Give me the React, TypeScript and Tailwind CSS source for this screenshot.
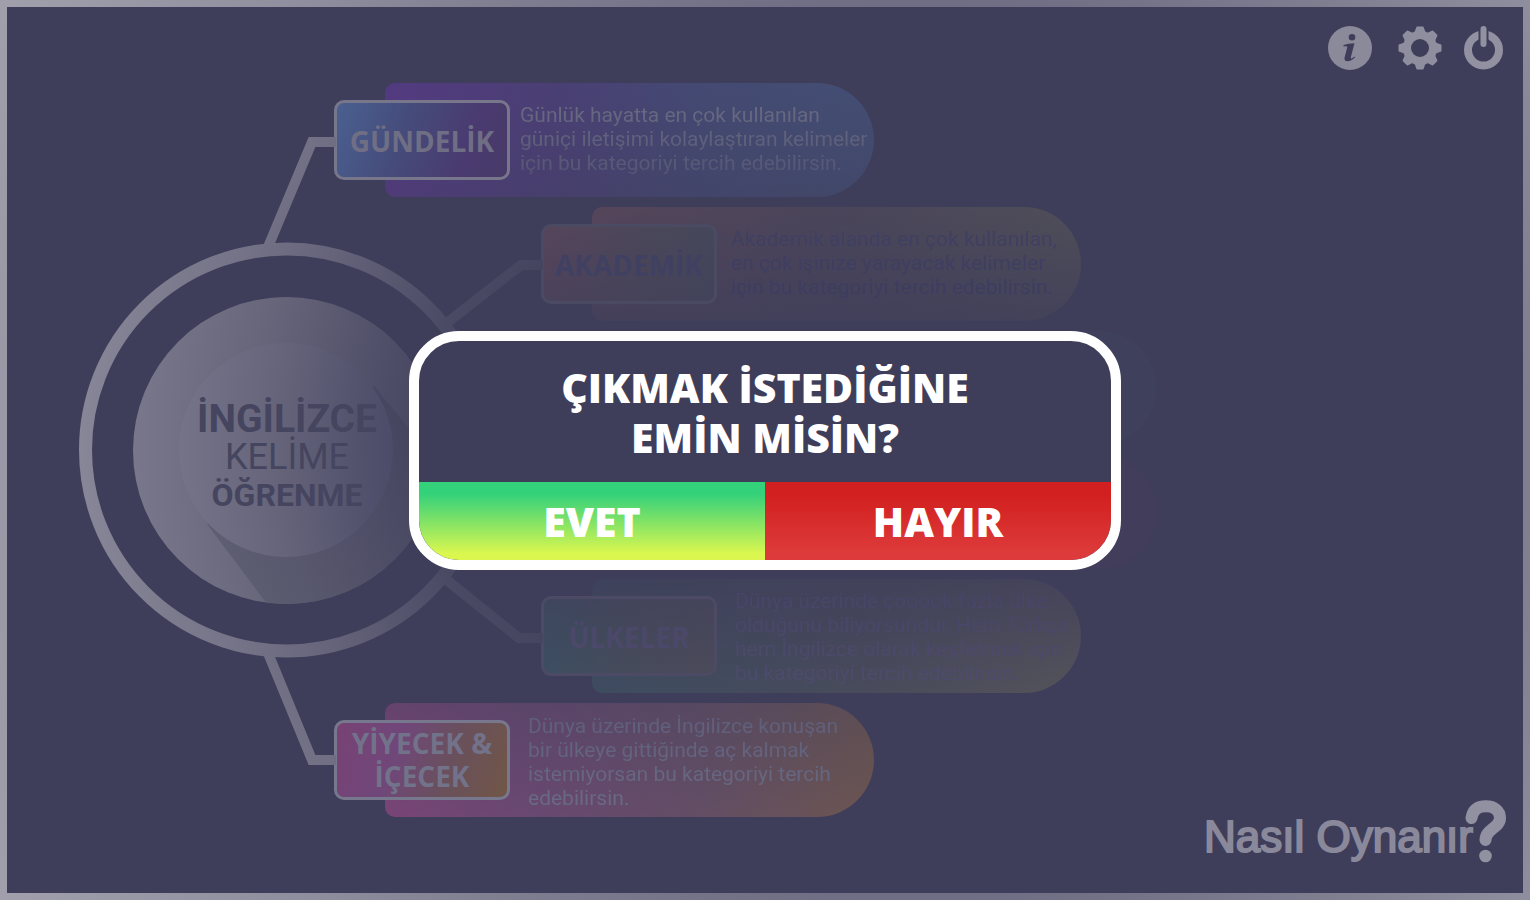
import React from "react";

const display = "font-['Open_Sans','Noto_Sans',sans-serif]";
const body = "font-[Roboto,'Liberation_Sans',sans-serif]";

type Category = {
  name?: string;
  lines: string[];
  indent: string;
  panel: string;
  box: string;
  label: string;
  text: string;
};

const categories: Category[] = [
  {
    name: "GÜNDELİK",
    lines: ["Günlük hayatta en çok kullanılan", "güniçi iletişimi kolaylaştıran kelimeler", "için bu kategoriyi tercih edebilirsin."],
    indent: "ml-[378px]",
    panel: "bg-[linear-gradient(170deg,rgba(63,62,90,0)_20%,rgba(63,62,90,0.5)_100%),linear-gradient(90deg,#533a80_0%,#4a3f74_35%,#444a74_65%,#445178_100%)]",
    box: "border-[#77768a] bg-[linear-gradient(110deg,#4a6090_0%,#454b7a_40%,#4a3a70_75%,#483a68_100%)]",
    label: "text-[#6f6e84] pt-[2px]",
    text: "from-[#6a6b82] to-[#545575] pb-[2px] pl-[10px]",
  },
  {
    name: "AKADEMİK",
    lines: ["Akademik alanda en çok kullanılan,", "en çok işinize yarayacak kelimeler", "için bu kategoriyi tercih edebilirsin."],
    indent: "ml-[585px]",
    panel: "bg-[linear-gradient(180deg,rgba(63,62,90,0)_0%,rgba(63,62,90,0.75)_100%),linear-gradient(90deg,#55455a_0%,#4a455a_50%,#4f4e58_100%)]",
    box: "border-[#4a4a63] bg-[linear-gradient(180deg,rgba(63,62,90,0)_0%,rgba(63,62,90,0.5)_100%),linear-gradient(90deg,#56455b_0%,#4b4759_60%,#45475b_100%)]",
    label: "text-[#404162] pt-[2px]",
    text: "from-[#3f4062] to-[#3c3c60] pb-[2px] pl-[14px]",
  },
  {
    lines: [],
    indent: "ml-[661px]",
    panel: "bg-[#3f405b]",
    box: "",
    label: "",
    text: "",
  },
  {
    lines: [],
    indent: "ml-[661px]",
    panel: "bg-[#423d5b]",
    box: "",
    label: "",
    text: "",
  },
  {
    name: "ÜLKELER",
    lines: ["Dünya üzerinde çooook fazla ülke", "olduğunu biliyorsundur, Hem Türkçe", "hem İngilizce olarak keşfetmek için", "bu kategoriyi tercih edebilirsin."],
    indent: "ml-[585px]",
    panel: "bg-[linear-gradient(0deg,rgba(63,62,90,0)_0%,rgba(63,62,90,0.75)_100%),linear-gradient(90deg,#3e4c60_0%,#484b5b_55%,#54535a_100%)]",
    box: "border-[#4c4a65] bg-[linear-gradient(0deg,rgba(63,62,90,0)_0%,rgba(63,62,90,0.5)_100%),linear-gradient(90deg,#3d4e61_0%,#464b5b_50%,#4b4a5a_100%)]",
    label: "text-[#4b486a] pt-[2px]",
    text: "from-[#474467] to-[#4e4b6d] pt-[2px] pl-[18px]",
  },
  {
    name: "YİYECEK & İÇECEK",
    lines: ["Dünya üzerinde İngilizce konuşan", "bir ülkeye gittiğinde aç kalmak", "istemiyorsan bu kategoriyi tercih", "edebilirsin."],
    indent: "ml-[378px]",
    panel: "bg-[linear-gradient(0deg,rgba(63,62,90,0)_0%,rgba(63,62,90,0.35)_100%),linear-gradient(90deg,#794576_0%,#694871_30%,#634e65_65%,#6c5550_100%)]",
    box: "border-[#77778d] bg-[linear-gradient(110deg,#784274_0%,#70477a_35%,#69505c_65%,#715646_100%)]",
    label: "text-[#72728a]",
    text: "from-[#5e5e7b] to-[#6a6b84] pt-1 pl-[18px]",
  },
];

function CategoryRow({ c }: { c: Category }) {
  return (
    <li className={`flex h-[114px] w-[489px] items-center rounded-l-[10px] rounded-r-[57px] ${c.indent} ${c.panel}`}>
      {c.name && (
        <>
          <button
            type="button"
            className={`-ml-[51px] h-20 w-[176px] shrink-0 rounded-[10px] border-[3px] text-center text-[28px] leading-[33px] font-bold ${display} ${c.box} ${c.label}`}
          >
            {c.name}
          </button>
          <p className={`bg-linear-to-b bg-clip-text text-[21px] leading-6 whitespace-nowrap text-transparent ${body} ${c.text}`}>
            {c.lines.map((line) => (
              <span key={line} className="block">
                {line}
              </span>
            ))}
          </p>
        </>
      )}
    </li>
  );
}

function Wheel() {
  return (
    <svg className="absolute top-0 left-0" width="560" height="734" viewBox="7 83 560 734" aria-hidden="true">
      <defs>
        <radialGradient id="line" gradientUnits="userSpaceOnUse" cx="765" cy="450" r="700">
          <stop offset="0.3" stopColor="#3f3e5a" />
          <stop offset="0.48" stopColor="#4a4964" />
          <stop offset="0.75" stopColor="#6e6d82" />
          <stop offset="1" stopColor="#8a899a" />
        </radialGradient>
        <radialGradient id="disc" gradientUnits="userSpaceOnUse" cx="765" cy="450" r="640">
          <stop offset="0.45" stopColor="#413f5c" />
          <stop offset="0.6" stopColor="#4e4d67" />
          <stop offset="0.8" stopColor="#66657a" />
          <stop offset="1" stopColor="#79788c" />
        </radialGradient>
        <radialGradient id="hub" gradientUnits="userSpaceOnUse" cx="765" cy="450" r="590">
          <stop offset="0.5" stopColor="#413f5c" />
          <stop offset="0.64" stopColor="#4d4c69" />
          <stop offset="0.84" stopColor="#66657b" />
          <stop offset="1" stopColor="#757489" />
        </radialGradient>
        <linearGradient id="shade" gradientUnits="userSpaceOnUse" x1="230" y1="560" x2="430" y2="480">
          <stop offset="0" stopColor="#5e5e72" />
          <stop offset="0.7" stopColor="#4e4d66" />
          <stop offset="1" stopColor="#464560" />
        </linearGradient>
        <clipPath id="discClip">
          <circle cx="286.500" cy="450.500" r="153.500" />
        </clipPath>
      </defs>
      <g fill="none" stroke="url(#line)" strokeWidth="10">
        <path d="M268 247 L312 142 H336" />
        <path d="M443 326 L521 265 H543" />
        <path d="M443 577 L519 638 H543" />
        <path d="M268 653 L312 760 H336" />
        <circle cx="286.500" cy="450" r="201" strokeWidth="13" />
      </g>
      <circle cx="286.500" cy="450.500" r="153.500" fill="url(#disc)" />
      <path clipPath="url(#discClip)" d="M207 524 L270 608 H450 V478 L374 386 Z" fill="url(#shade)" />
      <circle cx="286" cy="450" r="107" fill="url(#hub)" />
    </svg>
  );
}

function InfoIcon() {
  return (
    <svg width="44" height="44" viewBox="0 0 44 44" aria-hidden="true">
      <circle cx="22" cy="22" r="22" fill="#8b8a9b" />
      <circle cx="24" cy="11.300" r="3.300" fill="#3f3e5a" />
      <path d="M15.500 19 Q20 17.200 26.500 17.200 L23 30.500 Q22.400 33 23.600 32.600 Q24.900 32 26.400 30.600 L27 31.600 Q23.400 35.200 19.400 35.200 Q15.800 35 16.600 31.400 L19.100 21.700 Q19.500 20 17.500 20.300 L15.500 20.600 Z" fill="#3f3e5a" />
    </svg>
  );
}

function GearIcon() {
  return (
    <svg width="44" height="44" viewBox="0 0 44 44" aria-hidden="true">
      <g fill="#8f8e9f">
        {[0, 45, 90, 135, 180, 225, 270, 315].map((a) => (
          <path key={a} transform={`rotate(${a} 22 22)`} d="M14 9 Q17.500 5.500 18.200 1.500 Q18.300 0.500 19.500 0.500 H24.500 Q25.700 0.500 25.800 1.500 Q26.500 5.500 30 9 Z" />
        ))}
      </g>
      <circle cx="22" cy="22" r="13" fill="none" stroke="#8f8e9f" strokeWidth="8" />
    </svg>
  );
}

function PowerIcon() {
  return (
    <svg width="40" height="44" viewBox="0 0 40 44" aria-hidden="true">
      <circle cx="19.500" cy="24" r="15.500" fill="none" stroke="#9291a2" strokeWidth="8" />
      <path d="M19.500 3.500 V18" stroke="#3f3e5a" strokeWidth="10" />
      <path d="M19.500 3 V18" stroke="#9291a2" strokeWidth="6" strokeLinecap="round" />
    </svg>
  );
}

export default function App() {
  return (
    <div className="relative flex min-h-screen flex-col bg-[radial-gradient(circle_farthest-corner_at_60%_50%,#6f6e84_44%,#8f8e9e_74%,#a09fab_100%)] p-[7px]">
      <main className="relative flex flex-1 items-center overflow-hidden bg-[#3f3e5a]">
        <section className="relative">
          <Wheel />
          <ul className="flex flex-col gap-[10px]">
            {categories.map((c, i) => (
              <CategoryRow key={i} c={c} />
            ))}
          </ul>
          <h1 className={`absolute top-[315px] left-[171px] w-[218px] text-center text-[#45455f] ${body}`}>
            <span className="block text-[39px] leading-[42px] font-bold">İNGİLİZCE</span>
            <span className="block text-[36px] leading-[34px] font-normal">KELİME</span>
            <span className="block text-[32px] leading-[42px] font-bold">ÖĞRENME</span>
          </h1>
        </section>

        <nav className="absolute top-[19px] right-[19px] flex items-start gap-[26px]">
          <button type="button" aria-label="Bilgi">
            <InfoIcon />
          </button>
          <button type="button" aria-label="Ayarlar">
            <GearIcon />
          </button>
          <button type="button" aria-label="Çıkış" className="-ml-1">
            <PowerIcon />
          </button>
        </nav>

        <a href="#nasil" className="absolute right-4 bottom-[30px] flex items-end font-['Liberation_Sans',Arial,sans-serif] text-[#8a899b]">
          <span className="text-[44px] leading-[52px] [-webkit-text-stroke:2px_#8a899b]">Nasıl Oynanır</span>
          <svg width="42" height="63" viewBox="0 0 42 63" className="-ml-2" fill="none" aria-label="?">
            <path d="M6.500 18 C8 9.500 13 6.300 21 6.300 C29 6.300 35 10.500 35 18 C35 28 20.500 29 20.500 40" stroke="#9291a2" strokeWidth="12" strokeLinecap="round" />
            <circle cx="20.500" cy="56" r="6.300" fill="#9291a2" />
          </svg>
        </a>
      </main>

      <div className="pointer-events-none absolute inset-0 flex items-center justify-center">
        <div
          role="dialog"
          aria-modal="true"
          aria-labelledby="exit-title"
          className={`pointer-events-auto w-[712px] overflow-hidden rounded-[50px] border-10 border-white bg-[#3f3e5a] font-extrabold text-white ${display}`}
        >
          <h2 id="exit-title" className="px-10 pt-[21px] pb-5 text-center text-[41px] leading-[50px]">
            ÇIKMAK İSTEDİĞİNE
            <br />
            EMİN MİSİN?
          </h2>
          <div className="grid grid-cols-2 text-[41px] leading-[78px]">
            <button type="button" className="bg-[linear-gradient(180deg,#33d17a_15%,#dbf74f_92%)]">
              EVET
            </button>
            <button type="button" className="bg-[linear-gradient(180deg,#d21f1f_15%,#dd3b3b_92%)]">
              HAYIR
            </button>
          </div>
        </div>
      </div>
    </div>
  );
}
